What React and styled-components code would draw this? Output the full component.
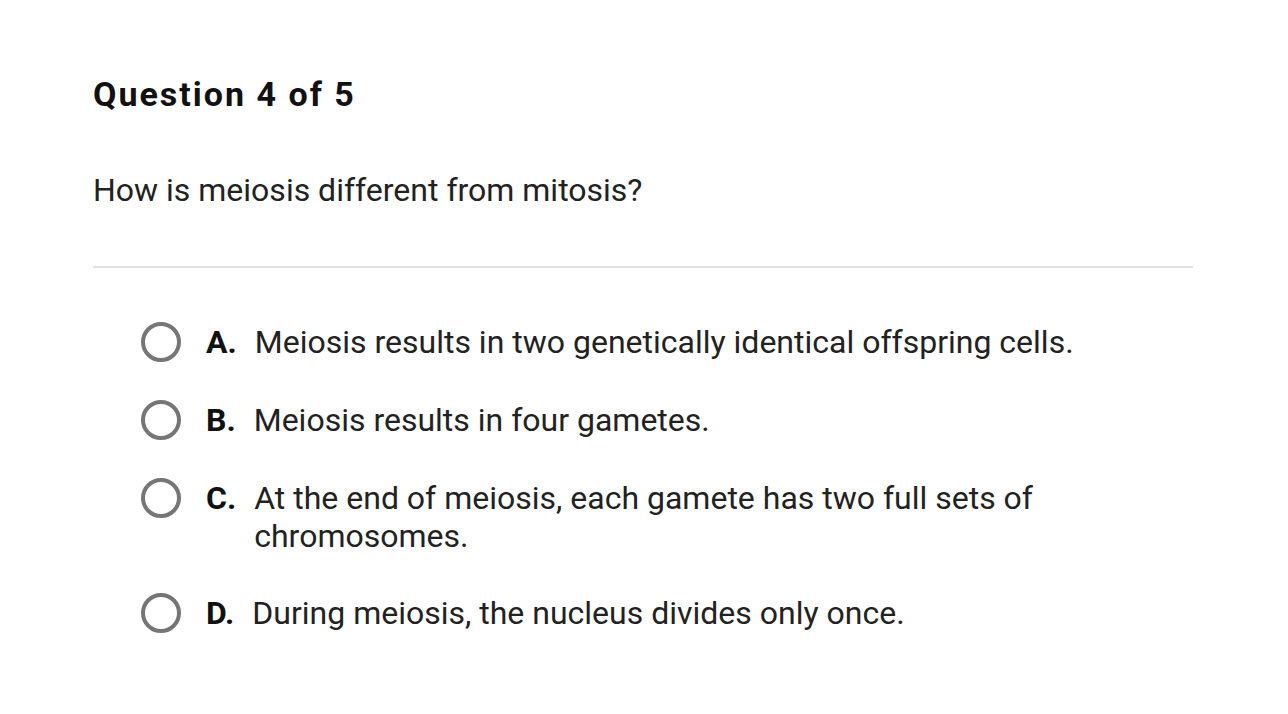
import styled, { createGlobalStyle } from "styled-components";

const Global = createGlobalStyle`
  html, body {
    margin: 0;
    padding: 0;
    background: #fff;
    overflow: hidden;
  }
  body {
    font-family: Roboto, "Liberation Sans", sans-serif;
    color: #222;
  }
`;

const Page = styled.div`
  padding: 74px 95px 0 93px;
  height: 714px;
  box-sizing: border-box;
  overflow: hidden;
`;

const Title = styled.h1`
  margin: 0;
  font-size: 34px;
  line-height: 40px;
  font-weight: 700;
  letter-spacing: 2px;
  color: #111;
`;

const Prompt = styled.p`
  margin: 57px 0 0;
  font-size: 32px;
  line-height: 38px;
  color: #222;
`;

const Divider = styled.hr`
  margin: 57px 0 0;
  border: none;
  height: 2px;
  background: #e0e0e0;
`;

const Options = styled.div`
  display: flex;
  flex-direction: column;
  gap: 39px;
  margin-top: 55px;
  padding-left: 48px;
`;

const Option = styled.label`
  display: flex;
  align-items: flex-start;
  cursor: pointer;
`;

const Radio = styled.span`
  flex: none;
  width: 40px;
  height: 40px;
  box-sizing: border-box;
  border: 4px solid #767676;
  border-radius: 50%;
  margin-top: -1px;
  margin-right: 25px;
`;

const Letter = styled.span`
  flex: none;
  font-size: 32px;
  line-height: 38px;
  font-weight: 700;
  color: #111;
  margin-right: 18px;
`;

const Text = styled.span`
  font-size: 32px;
  line-height: 38px;
  color: #222;
  max-width: 880px;
`;

const Footer = styled.div`
  display: flex;
  justify-content: flex-end;
  margin-top: 83px;
  padding-right: 3px;
`;

const NextButton = styled.div`
  width: 158px;
  height: 48px;
  border: 1px solid #e3e3e3;
  border-radius: 4px;
  box-sizing: border-box;
  flex: none;
`;

const choices = [
  { key: "A", text: "Meiosis results in two genetically identical offspring cells." },
  { key: "B", text: "Meiosis results in four gametes." },
  { key: "C", text: "At the end of meiosis, each gamete has two full sets of chromosomes." },
  { key: "D", text: "During meiosis, the nucleus divides only once." },
];

export default function App() {
  return (
    <>
      <Global />
      <Page>
        <Title>Question 4 of 5</Title>
        <Prompt>How is meiosis different from mitosis?</Prompt>
        <Divider />
        <Options>
          {choices.map((c) => (
            <Option key={c.key}>
              <Radio />
              <Letter>{c.key}.</Letter>
              <Text>{c.text}</Text>
            </Option>
          ))}
        </Options>
        <Footer>
          <NextButton />
        </Footer>
      </Page>
    </>
  );
}
